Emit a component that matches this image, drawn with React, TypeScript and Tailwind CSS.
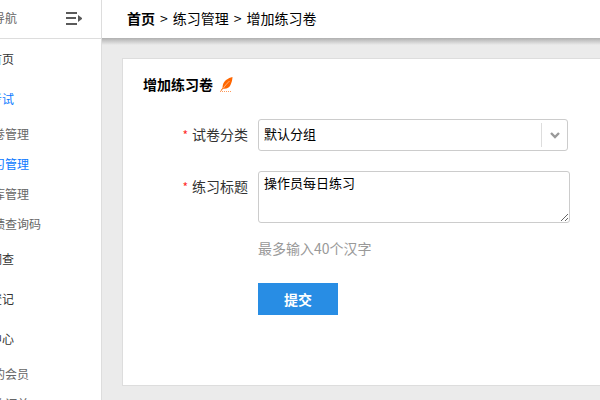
import { useState } from "react";

const navItems = [
  { label: "首页" },
  {
    label: "考试",
    active: true,
    children: [
      { label: "卷管理" },
      { label: "习管理", active: true },
      { label: "库管理" },
      { label: "绩查询码" },
    ],
  },
  { label: "调查" },
  { label: "登记" },
  { label: "中心", children: [{ label: "的会员" }, { label: "的订单" }] },
];

function CollapseIcon() {
  return (
    <svg viewBox="0 0 16 13" className="h-[13px] w-4" fill="#5a5a5a">
      <rect width="11" height="2" />
      <rect y="5" width="10" height="2" />
      <rect y="11" width="11" height="2" />
      <path d="M12 3l4.500 3.500-4.500 3.500z" />
    </svg>
  );
}

function FeatherIcon() {
  return (
    <svg viewBox="0 0 13 15" className="h-[15px] w-[13px]">
      <path d="M12.500 0C8 1 4 4 3 7.500c-.4 1.500-.4 2.500-.5 3.500l-2 2.500 1 .2 1.500-2C7 12 9 11 10.500 8c1.200-2.500 1.800-5 2-8z" fill="#ff6600" />
      <path d="M9.500 4C7.500 6 5 8.500 3.500 11" stroke="#fff" strokeWidth="0.5" fill="none" />
      <path d="M0 14.500h11" stroke="#ff9a5a" strokeDasharray="1 1" />
    </svg>
  );
}

function Sidebar() {
  return (
    <aside className="w-[102px] shrink-0 overflow-hidden border-r border-[#ddd] bg-white text-xs">
      <div className="flex h-[39px] items-center justify-between border-b border-[#ddd] pr-[19px] pb-[2px] text-[#666]">
        <span className="-ml-[7px]">导航</span>
        <button type="button" aria-label="导航">
          <CollapseIcon />
        </button>
      </div>
      <nav className="whitespace-nowrap">
        {navItems.map((item) => (
          <div key={item.label}>
            <a
              href="#"
              className={`-ml-[10px] block leading-10 ${item.active ? "text-[#0a78ff]" : "text-[#333]"}`}
            >
              {item.label}
            </a>
            {item.children?.map((child) => (
              <a
                key={child.label}
                href="#"
                className={`-ml-[7px] block leading-[30px] ${child.active ? "text-[#0a78ff]" : "text-[#666]"}`}
              >
                {child.label}
              </a>
            ))}
          </div>
        ))}
      </nav>
    </aside>
  );
}

function Breadcrumb() {
  return (
    <header className="flex h-[38px] items-center gap-[5px] bg-white pb-[2px] pl-[25px] text-sm text-black">
      <a href="#" className="font-bold">
        首页
      </a>
      <span>&gt;</span>
      <a href="#">练习管理</a>
      <span>&gt;</span>
      <span>增加练习卷</span>
    </header>
  );
}

function FieldLabel({ htmlFor, text }: { htmlFor: string; text: string }) {
  return (
    <label htmlFor={htmlFor} className="w-[105px] shrink-0 text-right text-sm leading-[30px] text-[#333]">
      <span className="mr-1 text-xs text-[#ff2a2a]">*</span>
      {text}
    </label>
  );
}

function PaperForm() {
  const [title, setTitle] = useState("操作员每日练习");

  return (
    <form className="flex flex-col pt-[25px]" onSubmit={(e) => e.preventDefault()}>
      <div className="flex gap-[10px]">
        <FieldLabel htmlFor="category" text="试卷分类" />
        <div className="relative w-[310px]">
          <select
            id="category"
            className="h-8 w-full appearance-none rounded-[3px] border border-[#ccc] bg-white px-[5px] pb-[2px] text-[13px] text-black"
          >
            <option>默认分组</option>
          </select>
          <span className="pointer-events-none absolute inset-y-1 right-0 flex w-[27px] items-center justify-center border-l border-[#ddd]">
            <svg viewBox="0 0 10 7" className="h-[7px] w-[10px]" fill="none" stroke="#999" strokeWidth="2.4">
              <path d="M1 1l4 4 4-4" />
            </svg>
          </span>
        </div>
      </div>

      <div className="mt-5 flex gap-[10px]">
        <FieldLabel htmlFor="title" text="练习标题" />
        <textarea
          id="title"
          value={title}
          onChange={(e) => setTitle(e.target.value)}
          className="h-[52px] w-[312px] rounded-[3px] border border-[#ccc] bg-white px-[5px] py-[2px] text-[13px] leading-[18px] text-black"
        />
      </div>

      <div className="ml-[115px] flex flex-col items-start">
        <p className="mt-[15px] text-sm text-[#999]">最多输入40个汉字</p>
        <button type="submit" className="mt-[25px] h-8 w-20 bg-[#288de4] text-sm font-bold text-white">
          提交
        </button>
      </div>
    </form>
  );
}

export default function App() {
  return (
    <div className="flex h-screen overflow-hidden font-['Noto_Sans_CJK_SC',sans-serif]">
      <Sidebar />
      <div className="min-w-0 flex-1 bg-[#ebebeb]">
        <Breadcrumb />
        <div className="h-[7px] bg-linear-to-b from-[#b0b0b0] to-[#ebebeb]" />
        <main className="pt-[13px] pl-5">
          <section className="border border-r-0 border-[#ddd] bg-white pt-[15px] pb-[70px] pl-5">
            <h1 className="flex items-center gap-[7px] text-sm font-bold text-black">
              增加练习卷
              <FeatherIcon />
            </h1>
            <PaperForm />
          </section>
        </main>
      </div>
    </div>
  );
}
